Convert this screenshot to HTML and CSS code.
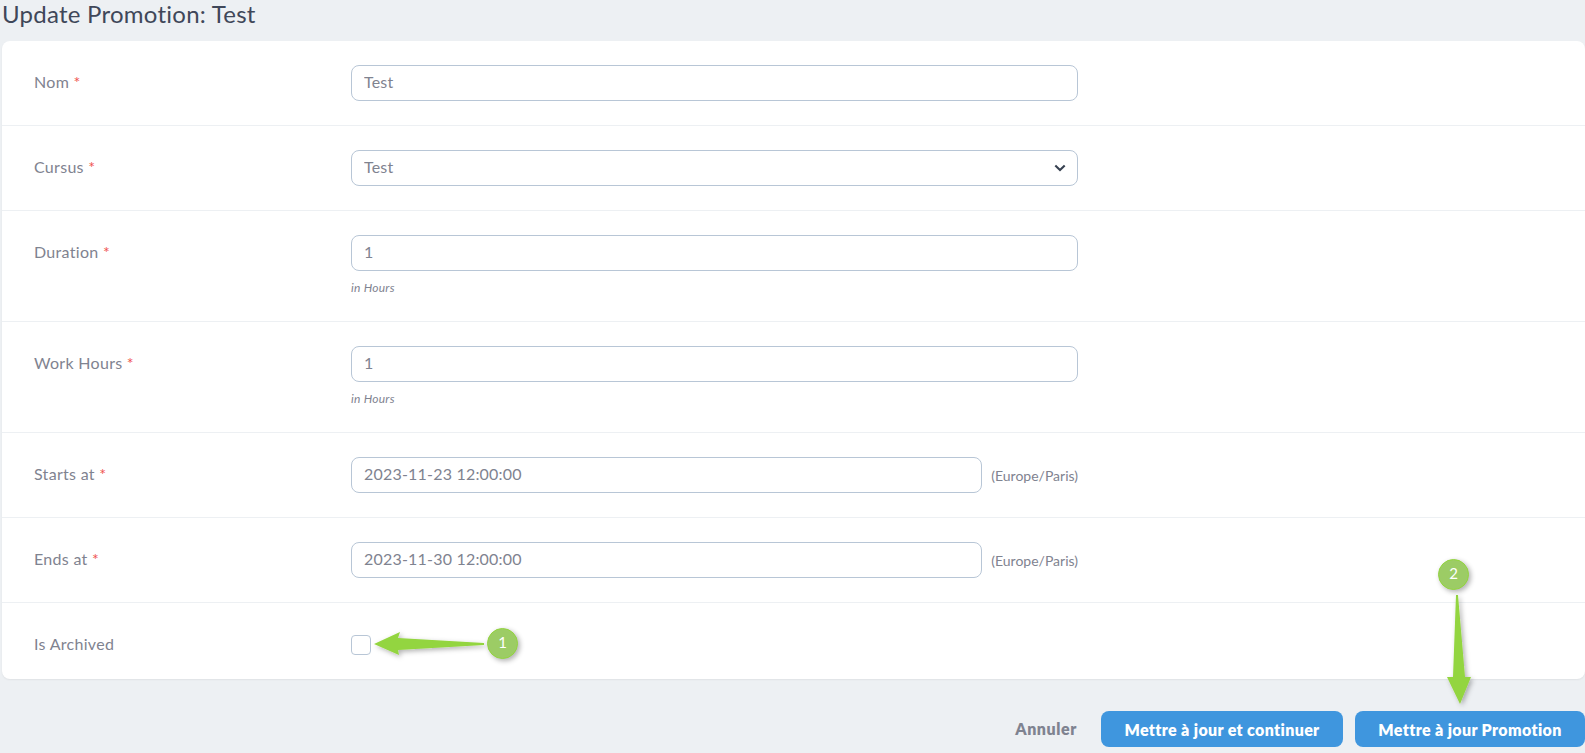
FILE: index.html
```html
<!DOCTYPE html>
<html lang="fr">
<head>
<meta charset="utf-8">
<title>Update Promotion: Test</title>
<link rel="stylesheet" href="styles.css">
</head>
<body>
<h1 class="title">Update Promotion: Test</h1>
<form class="card">
  <div class="row">
    <label class="label">Nom <span class="req">*</span></label>
    <div class="field"><input class="input" type="text" value="Test"></div>
  </div>
  <div class="row">
    <label class="label">Cursus <span class="req">*</span></label>
    <div class="field select-wrap">
      <select class="input select"><option>Test</option></select>
      <svg class="chevron" width="12" height="8" viewBox="0 0 12 8"><path d="M1.3 1.5 6 6 10.7 1.5" fill="none" stroke="#374151" stroke-width="2.1"/></svg>
    </div>
  </div>
  <div class="row">
    <label class="label">Duration <span class="req">*</span></label>
    <div class="field"><input class="input" type="text" value="1"><p class="help">in Hours</p></div>
  </div>
  <div class="row">
    <label class="label">Work Hours <span class="req">*</span></label>
    <div class="field"><input class="input" type="text" value="1"><p class="help">in Hours</p></div>
  </div>
  <div class="row">
    <label class="label">Starts at <span class="req">*</span></label>
    <div class="field date"><input class="input" type="text" value="2023-11-23 12:00:00"><span class="tz">(Europe/Paris)</span></div>
  </div>
  <div class="row">
    <label class="label">Ends at <span class="req">*</span></label>
    <div class="field date"><input class="input" type="text" value="2023-11-30 12:00:00"><span class="tz">(Europe/Paris)</span></div>
  </div>
  <div class="row row-last">
    <label class="label">Is Archived</label>
    <div class="field"><input class="check" type="checkbox"></div>
  </div>
</form>
<div class="actions">
  <a class="cancel">Annuler</a>
  <button class="btn btn-a" type="button">Mettre à jour et continuer</button>
  <button class="btn btn-b" type="button">Mettre à jour Promotion</button>
</div>
<svg class="arrows" width="1585" height="753" viewBox="0 0 1585 753">
  <defs>
    <filter id="sh" x="-30%" y="-30%" width="160%" height="160%"><feDropShadow dx="2" dy="2" stdDeviation="2.5" flood-color="#000" flood-opacity=".3"/></filter>
  </defs>
  <path filter="url(#sh)" fill="#93d53f" d="M374 644 400 632 398 638 484 643 484 645 398 650 399 655Z"/>
  <path filter="url(#sh)" fill="#93d53f" d="M1456 595 1458 595 1465 677 1471 677 1460 704 1447 677 1453 677Z"/>
</svg>
<span class="badge badge-1">1</span>
<span class="badge badge-2">2</span>
</body>
</html>
```
FILE: styles.css
```css
* { box-sizing: border-box; }
html, body { margin: 0; height: 100%; }
body {
  background: #edf0f3;
  font-family: "Lato", "Open Sans", sans-serif;
  color: #7f8390;
  overflow: hidden;
  position: relative;
  height: 753px;
}
.title {
  margin: 0;
  padding: 0 0 0 2px;
  height: 41px;
  font-size: 24px;
  line-height: 28px;
  font-weight: 400;
  letter-spacing: .25px;
  color: #3f4759;
}
.card {
  margin-left: 2px;
  background: #fff;
  border-radius: 8px;
  box-shadow: 0 1px 2px rgba(0,0,0,.06);
  height: 638px;
}
.row {
  display: flex;
  padding: 24px 0 24px 32px;
  border-bottom: 1px solid #edf0f3;
}
.row-last { border-bottom: 0; padding-top: 32px; padding-bottom: 0; }
.label {
  width: 317px;
  font-size: 16px;
  line-height: 34px;
  letter-spacing: .3px;
  color: #7f8390;
}
.row-last .label { line-height: 18px; }
.req { color: #ef5350; }
.field { width: 727px; }
.input {
  display: block;
  width: 100%;
  height: 36px;
  margin: 0;
  padding: 0 12px 4px;
  border: 1px solid #b8c6d6;
  border-radius: 8px;
  background: #fff;
  font: 16px "Lato", sans-serif;
  letter-spacing: .2px;
  color: #7f8390;
  outline: 0;
}
.select-wrap { position: relative; }
.select { appearance: none; -webkit-appearance: none; }
.chevron { position: absolute; right: 12px; top: 14px; }
.help {
  margin: 9px 0 1px;
  font-size: 12px;
  line-height: 16px;
  letter-spacing: .25px;
  font-style: italic;
  color: #7f8390;
}
.date { display: flex; align-items: center; justify-content: space-between; }
.date .input { width: 631px; }
.tz { font-size: 14px; color: #7f8390; }
.check {
  display: block;
  appearance: none;
  -webkit-appearance: none;
  width: 20px;
  height: 20px;
  margin: 0;
  border: 1px solid #b8c6d6;
  border-radius: 4px;
  background: #fff;
}
.actions {
  display: flex;
  justify-content: flex-end;
  align-items: center;
  gap: 12px;
  margin-top: 32px;
}
.cancel {
  margin-right: 12px;
  font-size: 16px;
  font-weight: 800;
  letter-spacing: .6px;
  color: #7f8390;
  position: relative;
  top: -1px;
}
.btn {
  height: 36px;
  padding: 0;
  border: 0;
  border-radius: 8px;
  background: #3f96de;
  color: #fff;
  font: 800 16px "Lato", sans-serif;
  letter-spacing: .35px;
}
.btn-a { width: 242px; }
.btn-b { width: 230px; }
.arrows { position: absolute; left: 0; top: 0; pointer-events: none; }
.badge {
  position: absolute;
  width: 31px;
  height: 31px;
  border-radius: 50%;
  background: #9ccc65;
  border: 1px solid #93d53f;
  box-shadow: 2px 2px 5px rgba(0,0,0,.3);
  color: #fff;
  font-size: 15px;
  line-height: 27px;
  text-align: center;
}
.badge-1 { left: 487px; top: 628px; }
.badge-2 { left: 1438px; top: 559px; }
```
